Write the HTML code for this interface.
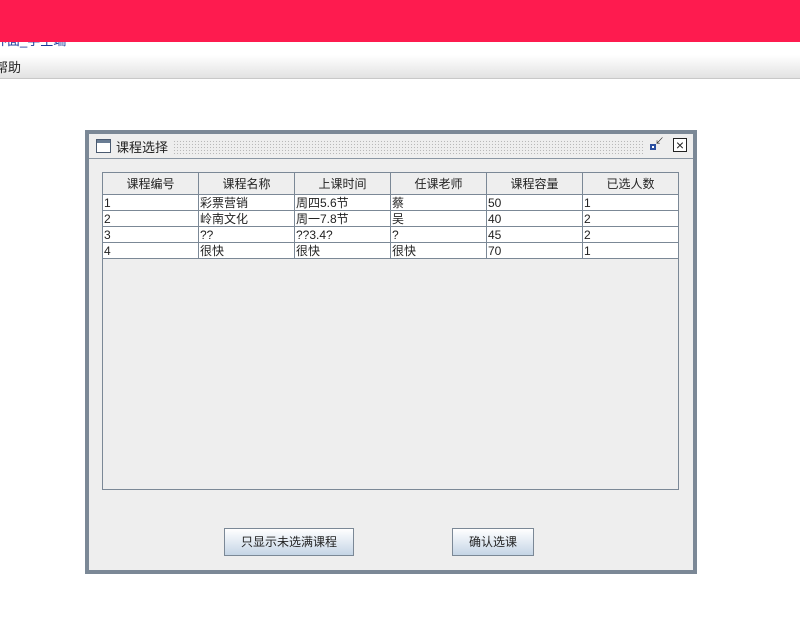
<!DOCTYPE html>
<html><head><meta charset="utf-8"><style>
*{margin:0;padding:0;box-sizing:border-box}
body{width:800px;height:630px;background:#fff;position:relative;overflow:hidden;font-family:"Liberation Sans","Noto Sans CJK SC","WenQuanYi Zen Hei",sans-serif;font-size:12px;color:#222}
.abs{position:absolute}
#red{left:0;top:0;width:800px;height:42px;background:#fe1b4f;z-index:2}
#menu{left:0;top:55px;width:800px;height:24px;background:linear-gradient(#fff,#e2e2e2);border-bottom:1px solid #c8c8c8}
#frame{left:85px;top:130px;width:612px;height:444px;border:4px solid #7b8896;background:#eeeeee}
#title{left:0;top:0;width:604px;height:25px;border-bottom:1px solid #8a96a3;background:#eee}
#dots{left:84px;top:6px;width:470px;height:14px;background-image:radial-gradient(#b8b8b8 0.6px,transparent 0.8px);background-size:3px 3px}
table{border-collapse:collapse;table-layout:fixed;position:absolute;left:0;top:0}
td{border:1px solid #7b8896;height:16px;padding:0 1px;line-height:14px;font-size:12px;background:#fff;overflow:hidden;white-space:nowrap}
th{border:1px solid #7b8896;height:22px;font-weight:normal;background:#eee;font-size:12px}
.btn{position:absolute;height:28px;border:1px solid #7b8896;background:linear-gradient(#fff,#c5d5e6);font-size:12px;text-align:center;line-height:26px}
</style></head><body>
<div id="red" class="abs"></div>
<div class="abs" style="left:-6px;top:34px;font-size:13px;color:#1a3a9a;line-height:14px">界面_学生端</div>
<div id="menu" class="abs"><span style="position:absolute;left:-5px;top:2px;font-size:13px">帮助</span></div>
<div id="frame" class="abs">
 <div id="title" class="abs">
  <div class="abs" style="left:7px;top:5px;width:15px;height:14px;border:1px solid #4a5a70;background:#fff"><div style="height:3px;background:#6a7d94"></div></div>
  <div class="abs" style="left:27px;top:3px;font-size:13px">课程选择</div>
  <div id="dots" class="abs"></div>
  <div class="abs" style="left:561px;top:10px;width:6px;height:6px;border:2px solid #2b4fa0;background:#fff"></div>
  <div class="abs" style="left:566px;top:3px;font-size:9px;line-height:9px">↙</div>
  <div class="abs" style="left:584px;top:4px;width:14px;height:14px;border:1px solid #222;background:#fff;font-size:14px;line-height:12px;text-align:center">×</div>
 </div>
 <div class="abs" style="left:13px;top:38px;width:577px;height:318px;border:1px solid #7b8896;background:#eee">
 <table style="width:577px;left:-1px;top:-1px">
  <colgroup><col style="width:96px"><col style="width:96px"><col style="width:96px"><col style="width:96px"><col style="width:96px"><col style="width:96px"></colgroup>
  <tr><th>课程编号</th><th>课程名称</th><th>上课时间</th><th>任课老师</th><th>课程容量</th><th>已选人数</th></tr>
  <tr><td>1</td><td>彩票营销</td><td>周四5.6节</td><td>蔡</td><td>50</td><td>1</td></tr>
  <tr><td>2</td><td>岭南文化</td><td>周一7.8节</td><td>吴</td><td>40</td><td>2</td></tr>
  <tr><td>3</td><td>??</td><td>??3.4?</td><td>?</td><td>45</td><td>2</td></tr>
  <tr><td>4</td><td>很快</td><td>很快</td><td>很快</td><td>70</td><td>1</td></tr>
 </table>
 </div>
 <div class="btn" style="left:135px;top:394px;width:130px">只显示未选满课程</div>
 <div class="btn" style="left:363px;top:394px;width:82px">确认选课</div>
</div>
</body></html>
